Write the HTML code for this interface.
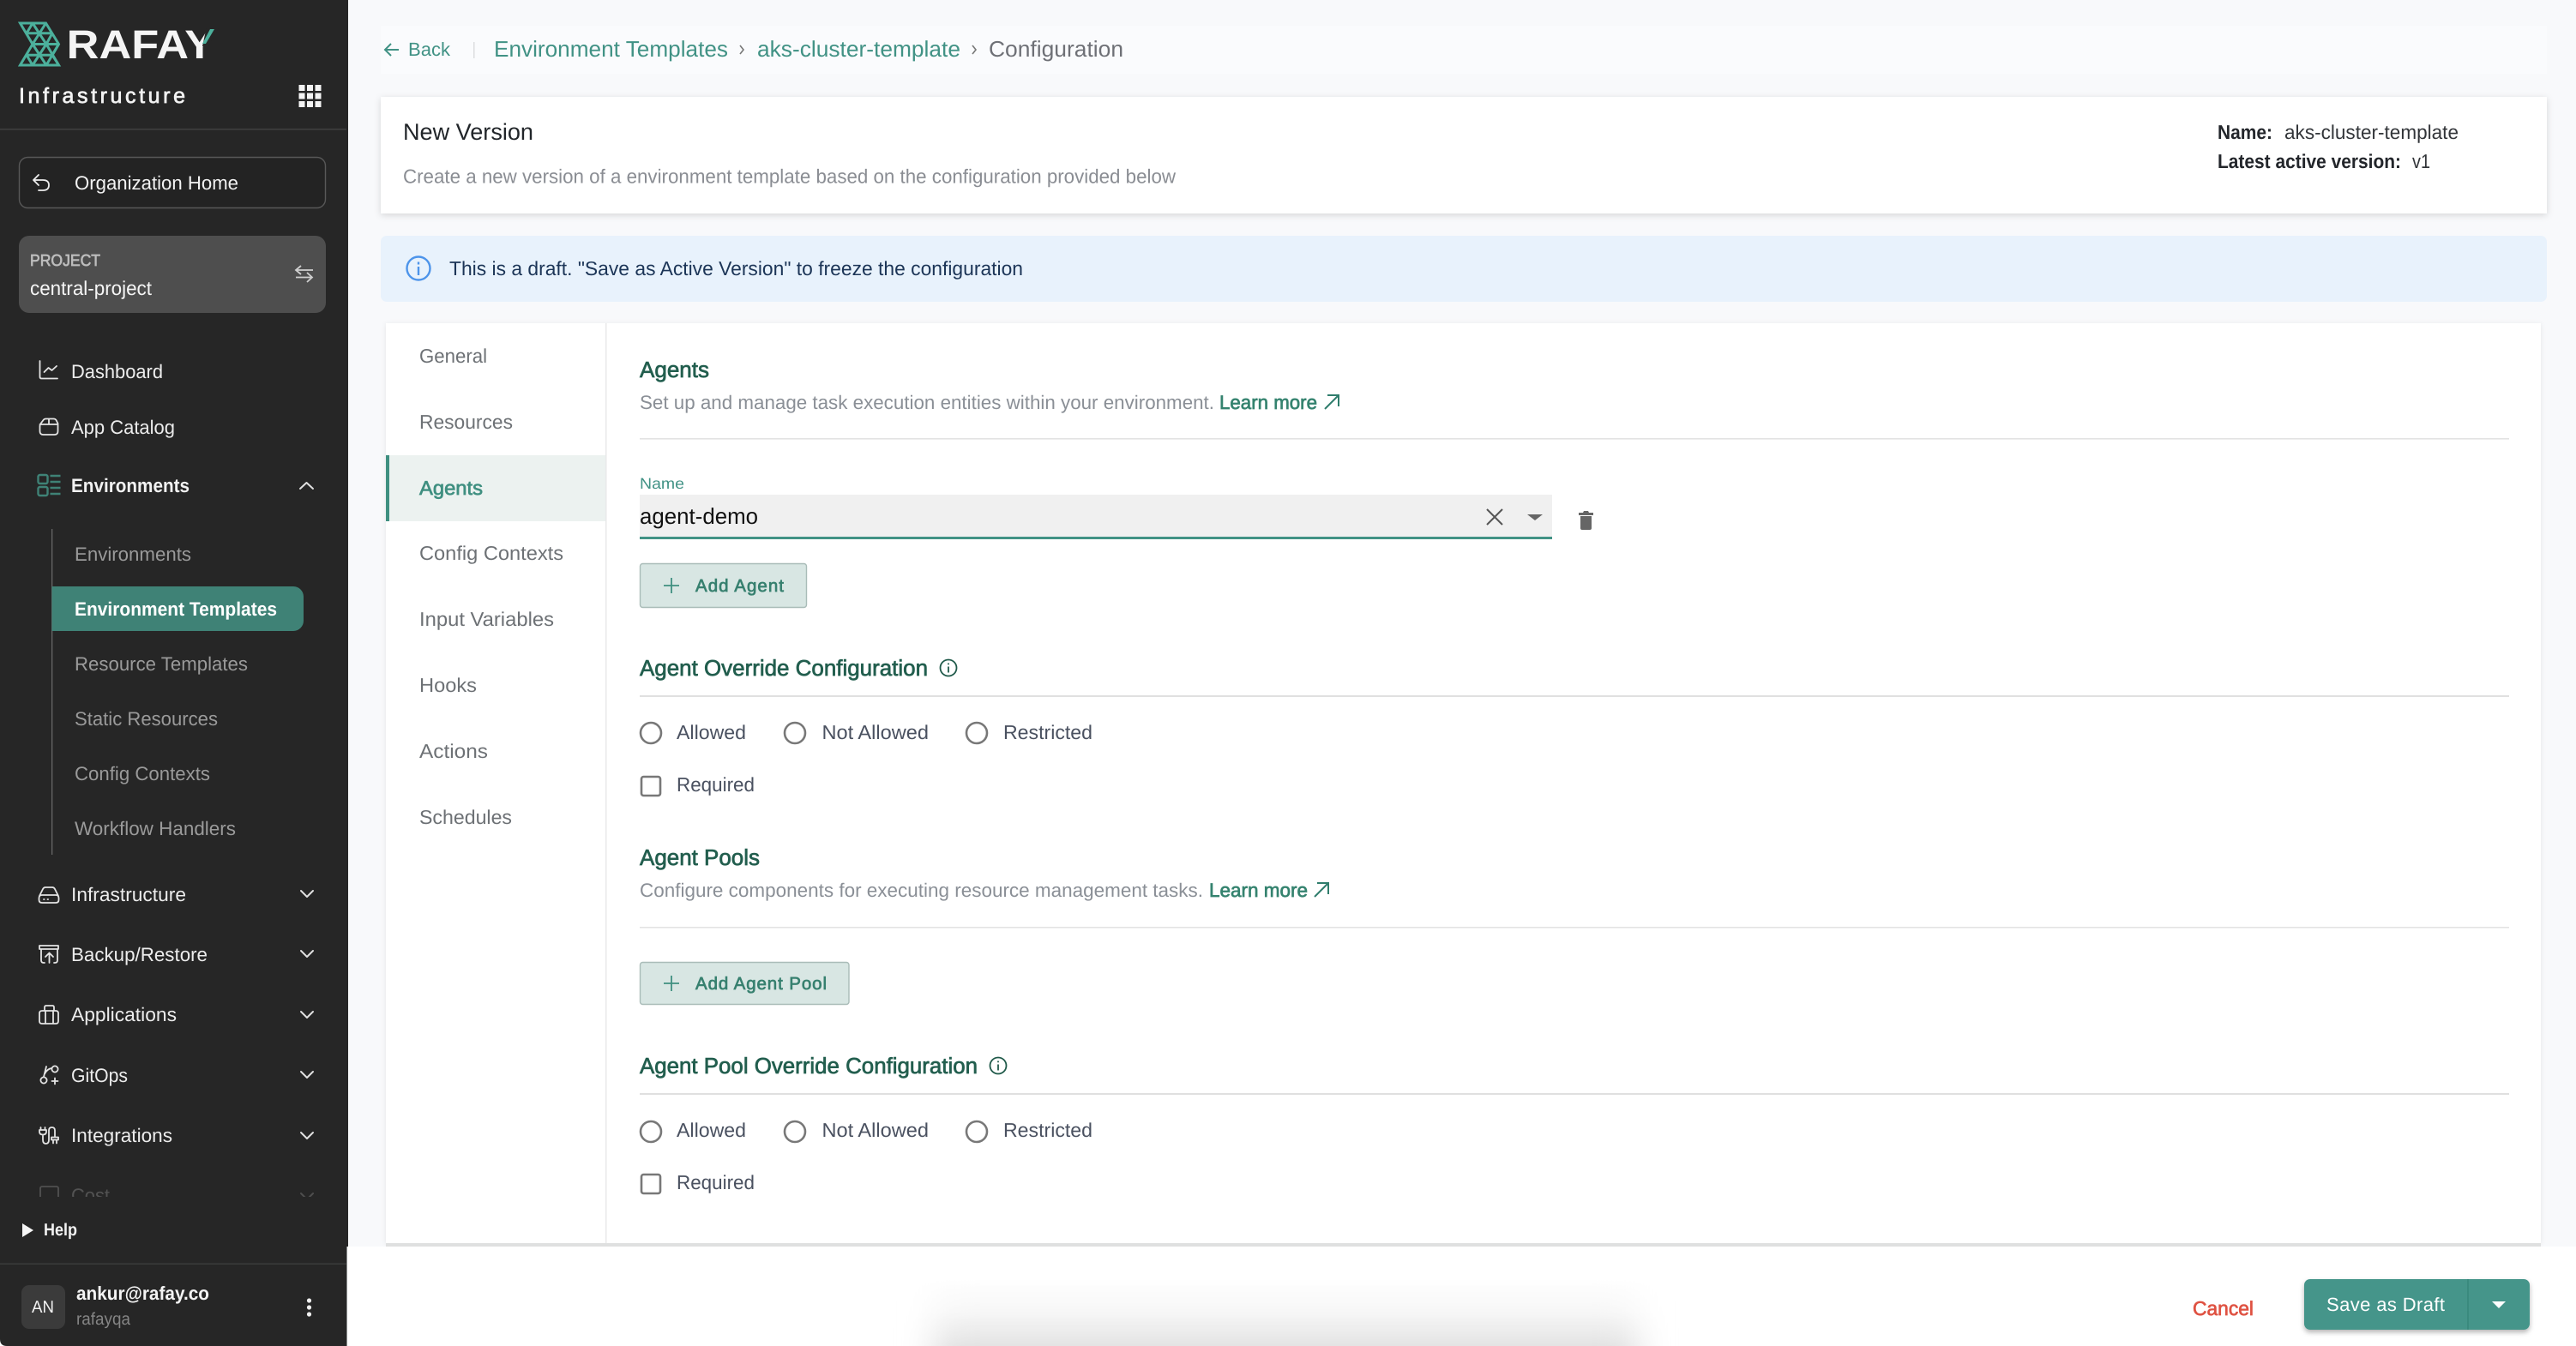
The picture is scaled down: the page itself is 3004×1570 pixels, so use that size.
<!DOCTYPE html>
<html><head><meta charset="utf-8"><title>New Version</title>
<style>
html,body{margin:0;padding:0;width:3004px;height:1570px;overflow:hidden;background:#f8f9fb}
svg{display:block}
text{font-family:"Liberation Sans",sans-serif;text-rendering:geometricPrecision}
.m{stroke:currentColor;stroke-width:.7px}
.ic{fill:none;stroke:#e4e4e4;stroke-width:1.8;stroke-linecap:round;stroke-linejoin:round}
.ch{fill:none;stroke:#e0e0e0;stroke-width:2;stroke-linecap:round;stroke-linejoin:round}
.rd{fill:#fff;stroke:#787878;stroke-width:2.6}
.lb{fill:#4a5160;font-size:23px}
.sd{fill:#ececec;font-size:22.5px}
.sb{fill:#9a9a9a;font-size:22.5px}
.nv{fill:#6d7175;font-size:23px}
.h{fill:#225e4e;color:#225e4e;font-size:26px}
.d{fill:#8a8f96;font-size:22.5px}
.lm{fill:#35836f;color:#35836f;font-size:22.5px}
.ad{fill:#37806f;color:#37806f;font-size:20.5px}
</style></head><body>
<svg xmlns="http://www.w3.org/2000/svg" width="3004" height="1570" viewBox="0 0 3004 1570">
<defs>
<filter id="s1" x="-2%" y="-20%" width="104%" height="140%"><feDropShadow dx="0" dy="2" stdDeviation="4" flood-color="#000" flood-opacity=".14"/></filter>
<filter id="s2" x="-2%" y="-2%" width="104%" height="104%"><feDropShadow dx="0" dy="1" stdDeviation="3" flood-color="#000" flood-opacity=".08"/></filter>
<filter id="s3" x="-10%" y="-30%" width="120%" height="170%"><feDropShadow dx="0" dy="3" stdDeviation="3" flood-color="#000" flood-opacity=".3"/></filter>
<filter id="bl" filterUnits="userSpaceOnUse" x="980" y="1490" width="1040" height="80"><feGaussianBlur stdDeviation="20 0"/></filter>
<linearGradient id="gr" x1="0" y1="0" x2="0" y2="1"><stop offset="0" stop-color="#fff"/><stop offset=".5" stop-color="#f7f7f7"/><stop offset="1" stop-color="#e3e3e3"/></linearGradient>
<clipPath id="cp"><rect x="0" y="1370" width="404" height="26"/></clipPath>
</defs>

<!-- main background -->
<rect width="3004" height="1570" fill="#f8f9fb"/>
<rect x="444" y="30" width="2526" height="56" fill="#fafbfd"/>

<!-- breadcrumb -->
<path d="M465 58H449M456 51l-7 7 7 7" fill="none" stroke="#419285" stroke-width="2"/>
<text x="476" y="65" font-size="22" fill="#419285" textLength="49" lengthAdjust="spacingAndGlyphs">Back</text>
<rect x="552" y="49" width="1.5" height="19" fill="#dcdee0"/>
<text x="576" y="66" font-size="26" fill="#419285" textLength="273" lengthAdjust="spacingAndGlyphs">Environment Templates</text>
<path d="M863 53l4 5-4 5" fill="none" stroke="#777" stroke-width="1.6"/>
<text x="883" y="66" font-size="26" fill="#419285" textLength="237" lengthAdjust="spacingAndGlyphs">aks-cluster-template</text>
<path d="M1134 53l4 5-4 5" fill="none" stroke="#777" stroke-width="1.6"/>
<text x="1153" y="66" font-size="26" fill="#6e7076" textLength="157" lengthAdjust="spacingAndGlyphs">Configuration</text>

<!-- header card -->
<rect x="444" y="113" width="2526" height="136" fill="#fff" filter="url(#s1)"/>
<text x="470" y="163" font-size="27" fill="#212529" textLength="152" lengthAdjust="spacingAndGlyphs">New Version</text>
<text x="470" y="213.5" font-size="23" fill="#8a8d93" textLength="901" lengthAdjust="spacingAndGlyphs">Create a new version of a environment template based on the configuration provided below</text>
<text x="2586" y="162" font-size="23" font-weight="700" fill="#23262b" textLength="64" lengthAdjust="spacingAndGlyphs">Name:</text>
<text x="2664" y="162" font-size="23" fill="#33363a" textLength="203" lengthAdjust="spacingAndGlyphs">aks-cluster-template</text>
<text x="2586" y="196" font-size="23" font-weight="700" fill="#23262b" textLength="214" lengthAdjust="spacingAndGlyphs">Latest active version:</text>
<text x="2813" y="196" font-size="23" fill="#33363a" textLength="21" lengthAdjust="spacingAndGlyphs">v1</text>

<!-- info banner -->
<rect x="444" y="275" width="2526" height="77" rx="7" fill="#e8f2fc"/>
<circle cx="488" cy="313" r="13.5" fill="none" stroke="#4d94ea" stroke-width="2.4"/>
<rect x="486.8" y="311" width="2.4" height="10" fill="#4d94ea"/><rect x="486.8" y="305.5" width="2.4" height="3" fill="#4d94ea"/>
<text x="524" y="321" font-size="23" fill="#1c3557" textLength="669" lengthAdjust="spacingAndGlyphs">This is a draft. "Save as Active Version" to freeze the configuration</text>

<!-- big card -->
<rect x="450" y="377" width="2513" height="1073" fill="#fff" filter="url(#s2)"/>
<rect x="450" y="1450" width="2513" height="4" fill="#dfe0e0"/>
<rect x="706" y="377" width="1.5" height="1073" fill="#e8e9ea"/>
<rect x="450" y="531" width="256" height="77" fill="#ecf2f0"/>
<rect x="450" y="531" width="4" height="77" fill="#3f8f80"/>
<text class="nv" x="489" y="423" textLength="79" lengthAdjust="spacingAndGlyphs">General</text>
<text class="nv" x="489" y="500" textLength="109" lengthAdjust="spacingAndGlyphs">Resources</text>
<text class="nv m" x="489" y="577" style="fill:#3f8f80;color:#3f8f80" textLength="74" lengthAdjust="spacingAndGlyphs">Agents</text>
<text class="nv" x="489" y="653" textLength="168" lengthAdjust="spacingAndGlyphs">Config Contexts</text>
<text class="nv" x="489" y="730" textLength="157" lengthAdjust="spacingAndGlyphs">Input Variables</text>
<text class="nv" x="489" y="807" textLength="67" lengthAdjust="spacingAndGlyphs">Hooks</text>
<text class="nv" x="489" y="884" textLength="80" lengthAdjust="spacingAndGlyphs">Actions</text>
<text class="nv" x="489" y="961" textLength="108" lengthAdjust="spacingAndGlyphs">Schedules</text>

<!-- agents -->
<text class="h m" x="746" y="440" textLength="81" lengthAdjust="spacingAndGlyphs">Agents</text>
<text class="d" x="746" y="477" textLength="670" lengthAdjust="spacingAndGlyphs">Set up and manage task execution entities within your environment.</text>
<text class="lm m" x="1422" y="477" textLength="114" lengthAdjust="spacingAndGlyphs">Learn more</text>
<path d="M1545 477L1561 461M1548 461H1561V474" fill="none" stroke="#2f7d6c" stroke-width="2"/>
<rect x="746" y="511" width="2180" height="1.6" fill="#e3e3e3"/>

<text x="746" y="570" font-size="18" fill="#419285" textLength="52" lengthAdjust="spacingAndGlyphs">Name</text>
<rect x="746" y="577" width="1064" height="49" fill="#f0f0f0"/>
<rect x="746" y="626" width="1064" height="3" fill="#419285"/>
<text x="746" y="611" font-size="26" fill="#111" textLength="138" lengthAdjust="spacingAndGlyphs">agent-demo</text>
<path d="M1734 594L1752 612M1752 594L1734 612" stroke="#555" stroke-width="2" fill="none"/>
<polygon points="1781,600 1799,600 1790,607" fill="#666"/>
<path d="M1843 602h13v14q0 2-2 2h-9q-2 0-2-2zM1841 598h5l1-2h5l1 2h5v3h-17z" fill="#666"/>

<rect x="746.500" y="657.500" width="194" height="51" rx="3" fill="#d8e6e3" stroke="#a9bcb8" stroke-width="1.400"/>
<path d="M774 683h18M783 674v18" stroke="#3f8f80" stroke-width="1.800" fill="none"/>
<text class="ad m" x="811" y="690" textLength="103" lengthAdjust="spacing">Add Agent</text>

<!-- agent override -->
<text class="h m" x="746" y="788" textLength="336" lengthAdjust="spacingAndGlyphs">Agent Override Configuration</text>
<circle cx="1106" cy="779" r="9.500" fill="none" stroke="#205a4a" stroke-width="1.800"/>
<path d="M1106 777.500v7M1106 773.500v1.800" stroke="#205a4a" stroke-width="1.800"/>
<rect x="746" y="811" width="2180" height="2" fill="#e0e0e0"/>
<circle class="rd" cx="759" cy="855" r="12"/>
<text class="lb" x="789" y="862" textLength="81" lengthAdjust="spacingAndGlyphs">Allowed</text>
<circle class="rd" cx="927" cy="855" r="12"/>
<text class="lb" x="958.500" y="862" textLength="124.500" lengthAdjust="spacingAndGlyphs">Not Allowed</text>
<circle class="rd" cx="1139" cy="855" r="12"/>
<text class="lb" x="1170" y="862" textLength="104" lengthAdjust="spacingAndGlyphs">Restricted</text>
<rect class="rd" x="748" y="906" width="22" height="22" rx="2.500"/>
<text class="lb" x="789" y="923" textLength="91" lengthAdjust="spacingAndGlyphs">Required</text>

<!-- agent pools -->
<text class="h m" x="746" y="1009" textLength="140" lengthAdjust="spacingAndGlyphs">Agent Pools</text>
<text class="d" x="746" y="1046" textLength="657" lengthAdjust="spacingAndGlyphs">Configure components for executing resource management tasks.</text>
<text class="lm m" x="1410" y="1046" textLength="115" lengthAdjust="spacingAndGlyphs">Learn more</text>
<path d="M1533 1046L1549 1030M1536 1030H1549V1043" fill="none" stroke="#2f7d6c" stroke-width="2"/>
<rect x="746" y="1081" width="2180" height="1.6" fill="#e3e3e3"/>

<rect x="746.500" y="1122.500" width="243.500" height="49" rx="3" fill="#d8e6e3" stroke="#a9bcb8" stroke-width="1.400"/>
<path d="M774 1147h18M783 1138v18" stroke="#3f8f80" stroke-width="1.800" fill="none"/>
<text class="ad m" x="811" y="1154" textLength="153" lengthAdjust="spacing">Add Agent Pool</text>

<!-- pool override -->
<text class="h m" x="746" y="1252" textLength="394" lengthAdjust="spacingAndGlyphs">Agent Pool Override Configuration</text>
<circle cx="1164" cy="1243" r="9.500" fill="none" stroke="#205a4a" stroke-width="1.800"/>
<path d="M1164 1241.500v7M1164 1237.500v1.800" stroke="#205a4a" stroke-width="1.800"/>
<rect x="746" y="1275" width="2180" height="2" fill="#e0e0e0"/>
<circle class="rd" cx="759" cy="1320" r="12"/>
<text class="lb" x="789" y="1326" textLength="81" lengthAdjust="spacingAndGlyphs">Allowed</text>
<circle class="rd" cx="927" cy="1320" r="12"/>
<text class="lb" x="958.500" y="1326" textLength="124.500" lengthAdjust="spacingAndGlyphs">Not Allowed</text>
<circle class="rd" cx="1139" cy="1320" r="12"/>
<text class="lb" x="1170" y="1326" textLength="104" lengthAdjust="spacingAndGlyphs">Restricted</text>
<rect class="rd" x="748" y="1370" width="22" height="22" rx="2.500"/>
<text class="lb" x="789" y="1387" textLength="91" lengthAdjust="spacingAndGlyphs">Required</text>

<!-- footer -->
<rect x="405" y="1454" width="2599" height="116" fill="#fff"/>
<rect x="1089" y="1490" width="821" height="80" fill="url(#gr)" filter="url(#bl)"/>
<text class="m" x="2557" y="1534" font-size="23" style="fill:#df5242;color:#df5242" textLength="71" lengthAdjust="spacingAndGlyphs">Cancel</text>
<rect x="2687" y="1492" width="263" height="59" rx="7" fill="#44958a" filter="url(#s3)"/>
<rect x="2877.500" y="1492" width="1" height="59" fill="#2e7f72"/>
<text x="2713" y="1529" font-size="22" fill="#fff" textLength="138" lengthAdjust="spacing">Save as Draft</text>
<polygon points="2906,1518 2922,1518 2914,1526" fill="#fff"/>

<!-- sidebar -->
<rect x="0" y="0" width="406" height="1454" fill="#262626"/>
<rect x="0" y="1454" width="404.500" height="116" fill="#262626"/>
<path d="M0 1562v8h8q-8 0-8-8z" fill="#fff"/>

<!-- logo -->
<g fill="none" stroke="#4cb09c" stroke-width="3" stroke-linejoin="miter">
<path d="M23.500 27H53.500L68.500 51.500 61 64.250 68.500 76H23.500L38 51.500z"/>
<path d="M31 38.750H61M38 51.500H68.500M31 64.250H61"/>
<path d="M38 27L54 51.500M38 51.500L54 76M54 51.500L68.500 76M31 64.250L38 76"/>
<path d="M38 27L31 38.750M53.500 27L38 51.500M61 38.750L54 51.500M54 51.500L38 76M68.500 51.500L54 76"/>
</g>
<text x="77.700" y="68" font-size="47" font-weight="700" fill="#f4f4f4" textLength="172.500" lengthAdjust="spacingAndGlyphs">RAFAY</text>
<polygon points="241,31 256,31 243,54 236,54" fill="#262626"/>
<polygon points="245,34 250,34 240,51 236,51" fill="#4cb09c"/>
<text class="m" x="22" y="120" font-size="25" fill="#f2f2f2" style="color:#f2f2f2" textLength="194" lengthAdjust="spacing">Infrastructure</text>
<g fill="#f4f4f4">
<rect x="348.500" y="99" width="7" height="7"/><rect x="358" y="99" width="7" height="7"/><rect x="367.500" y="99" width="7" height="7"/>
<rect x="348.500" y="108.500" width="7" height="7"/><rect x="358" y="108.500" width="7" height="7"/><rect x="367.500" y="108.500" width="7" height="7"/>
<rect x="348.500" y="118" width="7" height="7"/><rect x="358" y="118" width="7" height="7"/><rect x="367.500" y="118" width="7" height="7"/>
</g>
<rect x="0" y="150" width="404" height="1.500" fill="#404040"/>

<rect x="22.500" y="183.500" width="357" height="59" rx="10" fill="#232323" stroke="#585858" stroke-width="1.400"/>
<path d="M45 204l-6 6 6 6M39 210H50q7 0 7 6t-7 6H45" fill="none" stroke="#eee" stroke-width="1.800" stroke-linejoin="round" stroke-linecap="round"/>
<text x="87" y="221" font-size="22.500" fill="#f2f2f2" textLength="191" lengthAdjust="spacingAndGlyphs">Organization Home</text>

<rect x="22" y="275" width="358" height="90" rx="12" fill="#4e4e4e"/>
<text class="m" x="35" y="310" font-size="19" fill="#bdbdbd" style="color:#bdbdbd" textLength="82" lengthAdjust="spacingAndGlyphs">PROJECT</text>
<text x="35" y="344" font-size="23" fill="#f6f6f6" textLength="142" lengthAdjust="spacingAndGlyphs">central-project</text>
<path d="M351 310l-6 5 6 5M345 315H365M358 318l6 5.500-6 5.500M364 323.500H345" fill="none" stroke="#cfcfcf" stroke-width="1.800"/>

<!-- nav -->
<path class="ic" d="M46.500 421v18.500q0 2 2 2H67M51.500 434l5-5 4 3 5.500-5"/>
<text class="sd" x="83" y="441" textLength="107" lengthAdjust="spacingAndGlyphs">Dashboard</text>
<path class="ic" d="M46.500 497q0-2 1-3l3-4q1-1.500 3-1.500h9q2 0 3 1.500l2 4V503q0 4-4 4H50.500q-4 0-4-4zM46.500 495H67.500M57 489v6"/>
<text class="sd" x="83" y="506" textLength="121" lengthAdjust="spacingAndGlyphs">App Catalog</text>
<g fill="none" stroke="#3f8276" stroke-width="2.400"><rect x="44.500" y="554" width="11" height="10" rx="2"/><rect x="44.500" y="568" width="11" height="10" rx="2"/><path d="M58.500 555H70.500M58.500 562H70.500M58.500 569H70.500M58.500 576H70.500"/></g>
<text x="83" y="574" font-size="22.500" font-weight="700" fill="#f2f2f2" textLength="138" lengthAdjust="spacingAndGlyphs">Environments</text>
<path class="ch" d="M350 570l7.500-7 7.500 7"/>

<rect x="60" y="617" width="1.300" height="380" fill="#666"/>
<text class="sb" x="87" y="654" textLength="136" lengthAdjust="spacingAndGlyphs">Environments</text>
<path d="M60.500 684H342a12 12 0 0 1 12 12V724a12 12 0 0 1-12 12H60.500z" fill="#3f8276"/>
<text x="87" y="718" font-size="22.500" font-weight="700" fill="#fff" textLength="236" lengthAdjust="spacingAndGlyphs">Environment Templates</text>
<text class="sb" x="87" y="782" textLength="202" lengthAdjust="spacingAndGlyphs">Resource Templates</text>
<text class="sb" x="87" y="846" textLength="167" lengthAdjust="spacingAndGlyphs">Static Resources</text>
<text class="sb" x="87" y="910" textLength="158" lengthAdjust="spacingAndGlyphs">Config Contexts</text>
<text class="sb" x="87" y="974" textLength="188" lengthAdjust="spacingAndGlyphs">Workflow Handlers</text>

<path class="ic" d="M46 1045l4-8q1-2 3-2h8q2 0 3 2l4 8M49 1044H65q3.500 0 3.500 3.500v2q0 3.500-3.500 3.500H49q-3.500 0-3.500-3.500v-2q0-3.500 3.500-3.500zM51 1049h.6M55.500 1049h.6"/>
<text class="sd" x="83" y="1051" textLength="134" lengthAdjust="spacingAndGlyphs">Infrastructure</text>
<path class="ch" d="M351 1039l7 7 7-7"/>

<path class="ic" d="M46 1103H68V1107H46zM48 1107v13q0 3 3 3h1M67 1107v13q0 3-3 3h-1M57.500 1123v-11M53 1116l4.500-4.500 4.500 4.500"/>
<text class="sd" x="83" y="1121" textLength="159" lengthAdjust="spacingAndGlyphs">Backup/Restore</text>
<path class="ch" d="M351 1109l7 7 7-7"/>

<path class="ic" d="M46 1182q0-3 3-3H65q3 0 3 3v9q0 3-3 3H49q-3 0-3-3zM52 1179v-4q0-2 2-2h7q2 0 2 2v4M53 1179v15M62 1179v15"/>
<text class="sd" x="83" y="1191" textLength="123" lengthAdjust="spacingAndGlyphs">Applications</text>
<path class="ch" d="M351 1180l7 7 7-7"/>

<path class="ic" d="M51 1256l3-12M60 1246q-5 1-7.500 6"/><circle class="ic" cx="51" cy="1260" r="3.600"/><circle class="ic" cx="64" cy="1247" r="3.600"/><path class="ic" d="M60.500 1261h7M64 1257.500v7"/>
<text class="sd" x="83" y="1262" textLength="66" lengthAdjust="spacingAndGlyphs">GitOps</text>
<path class="ch" d="M351 1250l7 7 7-7"/>

<path class="ic" d="M46 1318H54v2q0 3.500-4 3.500T46 1320zM47.500 1315v3M52.500 1315v3M50 1323.500v6q0 4.500 3.500 4.500t3.500-4.500v-11q0-3.500 3.500-3.500t3.500 3.500v8M60 1326.500h8v3H60zM62 1329.500v4M66 1329.500v4"/>
<text class="sd" x="83" y="1332" textLength="118" lengthAdjust="spacingAndGlyphs">Integrations</text>
<path class="ch" d="M351 1321l7 7 7-7"/>

<g clip-path="url(#cp)" opacity=".22"><rect class="ic" x="47" y="1384" width="21" height="20" rx="2"/><text class="sd" x="83" y="1402" textLength="45" lengthAdjust="spacingAndGlyphs">Cost</text><path class="ch" d="M351 1392l7 7 7-7"/></g>

<polygon points="26,1427 39,1435 26,1443" fill="#f5f5f5"/>
<text x="51" y="1441" font-size="20" font-weight="700" fill="#f2f2f2" textLength="39" lengthAdjust="spacingAndGlyphs">Help</text>
<rect x="0" y="1473.500" width="404" height="1.400" fill="#3c3e3d"/>
<rect x="25" y="1499" width="51" height="51" rx="9" fill="#3b3b3b"/>
<text x="37" y="1531" font-size="20" fill="#f2f2f2" textLength="26" lengthAdjust="spacingAndGlyphs">AN</text>
<text x="89" y="1516" font-size="22" font-weight="700" fill="#f4f4f4" textLength="155" lengthAdjust="spacingAndGlyphs">ankur@rafay.co</text>
<text x="89" y="1545" font-size="20" fill="#858585" textLength="63" lengthAdjust="spacingAndGlyphs">rafayqa</text>
<circle cx="360.500" cy="1517" r="2.600" fill="#f0f0f0"/><circle cx="360.500" cy="1525" r="2.600" fill="#f0f0f0"/><circle cx="360.500" cy="1533" r="2.600" fill="#f0f0f0"/>
</svg>
</body></html>
